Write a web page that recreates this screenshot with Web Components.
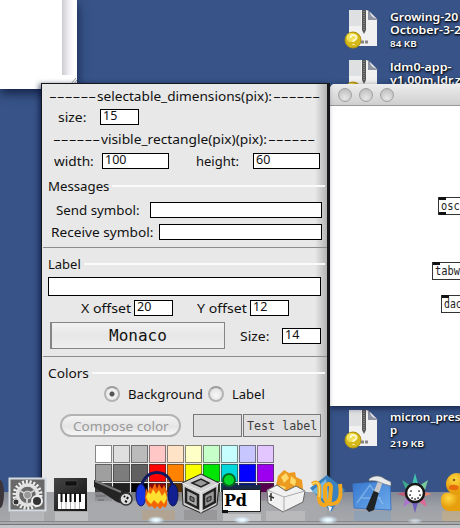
<!DOCTYPE html>
<html lang="en"><head><meta charset="utf-8"><title>Desktop</title>
<style>html,body{margin:0;width:460px;height:528px;overflow:hidden}</style></head>
<body><desk-top></desk-top>
<script>
const define = (name, html, init) => customElements.define(name, class extends HTMLElement {
  constructor() { super(); this.attachShadow({mode: 'open'}).innerHTML = html; }
  connectedCallback() { if (init) init(this, this.shadowRoot); }
});

// Text stretched horizontally to the width in w, with m as its left margin.
define('fit-text', `<style>
  :host{display:block;flex:none;white-space:pre;line-height:16px;height:16px}
  span{display:inline-block;transform-origin:0 50%;vertical-align:top}
  </style><span><slot></slot></span>`, (el, root) => {
  const w = +el.getAttribute('w'), s = root.querySelector('span');
  el.style.width = w + 'px';
  el.style.marginLeft = (el.getAttribute('m') || 0) + 'px';
  s.style.transform = `scaleX(${w / s.offsetWidth})`;
});

define('text-entry', `<style>
  :host{display:flex;flex:none;box-sizing:border-box;height:16px;border:1px solid #000;background:#fff;padding-left:2px;align-items:flex-start}
  ::slotted(fit-text){line-height:12px;height:12px;font-size:12.5px}
  </style><slot></slot>`, el => {
  el.style.width = el.getAttribute('w') + 'px';
  el.style.marginLeft = (el.getAttribute('m') || 0) + 'px';
});

define('form-row', `<style>:host{display:flex;flex:none;align-items:center;box-sizing:border-box}</style><slot></slot>`, el => {
  el.style.height = el.getAttribute('h') + 'px';
});

define('group-head', `<style>:host{display:flex;flex:none;align-items:center;box-sizing:border-box;padding:1px 2px 0 6px;gap:3px}
  i{flex:1;height:2px;background:#fafafa}</style><slot></slot><i></i>`, el => {
  el.style.height = el.getAttribute('h') + 'px';
});

define('rule-line', `<style>:host{display:block;flex:none;height:1px;background:#8b8b8b;margin-left:1px}</style>`);

define('radio-dot', `<style>:host{display:block;flex:none;box-sizing:border-box;width:16px;height:16px;border-radius:50%;border:2px solid #b3b3b3;border-top-color:#9c9c9c;background:radial-gradient(circle at 50% 60%,#f7f7f7,#dcdcdc)}
  :host([on]){background:radial-gradient(circle,#555 0 2px,#eee 3px)}</style>`);

define('color-grid', `<style>:host{display:grid;grid-template-columns:repeat(10,17px);grid-auto-rows:18px;gap:1px;width:179px;background:#e8e8e8;margin-left:53px}
  i{box-sizing:border-box;border:1px solid rgba(55,55,55,.6)}</style>`, (el, root) => {
  const c = ['#fff','#dfdfdf','#bbb','#ffc7c6','#ffe3c6','#feffc6','#c6ffc7','#c6feff','#c7c6ff','#e3c6ff',
    '#9f9f9f','#7c7c7c','#606060','#ff0400','#ff8300','#faff00','#00e504','#00d8dc','#0400ff','#9c00ee',
    '#404040','#202020','#000','#8c0808','#583000','#782814','#285014','#004450','#001488','#580050'];
  root.innerHTML += c.map(x => `<i style="background:${x}"></i>`).join('');
});

define('props-dialog', `<style>
  :host{display:flex;flex-direction:column;box-sizing:border-box;width:289px;height:445px;border:1px solid #15161c;border-right:3px solid #17191b;
   background:linear-gradient(90deg,transparent 273px,rgba(80,80,80,.34) 285px),#e8e8e8;color:#111;font:13px "Noto Sans",sans-serif;box-shadow:-2px 1px 5px rgba(5,15,50,.65)}
  .btn{display:flex;align-items:center;justify-content:center;box-sizing:border-box;width:175px;height:27px;margin-left:8px;border:1px solid #858585;border-left-width:2px;background:linear-gradient(#f1f1f1,#e7e7e7 50%,#eee)}
  .pill{display:flex;align-items:center;justify-content:center;box-sizing:border-box;width:121px;height:23px;margin-left:18px;border:2px solid #b3b3b3;border-radius:12px;background:linear-gradient(#f3f3f3,#e5e5e5 55%,#f6f6f6);color:#999}
  .sw{display:flex;align-items:center;box-sizing:border-box;width:49px;height:23px;border:1px solid #777;background:#e0e0e0;margin-left:12px}
  .sw.t{width:78px;margin-left:1px;color:#3d3d3d}
  .mono{font-family:"DejaVu Sans Mono",monospace}
  .g{flex:none}
  </style>
  <form-row h="24"><fit-text w="47" m="7">------</fit-text><fit-text w="175" m="1">selectable_dimensions(pix):</fit-text><fit-text w="47" m="1">------</fit-text></form-row>
  <div class="g" style="height:1px"></div>
  <form-row h="16"><fit-text w="29" m="16">size:</fit-text><text-entry w="39" m="13"><fit-text w="14">15</fit-text></text-entry></form-row>
  <form-row h="28"><fit-text w="47" m="11">------</fit-text><fit-text w="166" m="1">visible_rectangle(pix)(pix):</fit-text><fit-text w="47" m="1">------</fit-text></form-row>
  <form-row h="16"><fit-text w="40" m="12">width:</fit-text><text-entry w="67" m="8"><fit-text w="21">100</fit-text></text-entry><fit-text w="43" m="27">height:</fit-text><text-entry w="67" m="14"><fit-text w="14">60</fit-text></text-entry></form-row>
  <group-head h="33"><fit-text w="61">Messages</fit-text></group-head>
  <form-row h="16"><fit-text w="84" m="14">Send symbol:</fit-text><text-entry w="172" m="10"></text-entry></form-row>
  <div class="g" style="height:6px"></div>
  <form-row h="16"><fit-text w="102" m="9">Receive symbol:</fit-text><text-entry w="163" m="6"></text-entry></form-row>
  <div class="g" style="height:7px"></div><rule-line></rule-line>
  <group-head h="29" style="padding-top:3px"><fit-text w="33">Label</fit-text></group-head>
  <form-row h="19"><text-entry w="273" m="6" style="height:19px"></text-entry></form-row>
  <div class="g" style="height:4px"></div>
  <form-row h="16"><fit-text w="50" m="39">X offset</fit-text><text-entry w="39" m="3"><fit-text w="14">20</fit-text></text-entry><fit-text w="50" m="24">Y offset</fit-text><text-entry w="39" m="3"><fit-text w="14">12</fit-text></text-entry></form-row>
  <div class="g" style="height:6px"></div>
  <form-row h="27"><div class="btn"><fit-text class="mono" w="58" style="font-size:16px">Monaco</fit-text></div><fit-text w="29" m="15">Size:</fit-text><text-entry w="39" m="13"><fit-text w="14">14</fit-text></text-entry></form-row>
  <div class="g" style="height:7px"></div><rule-line></rule-line>
  <group-head h="29" style="padding-top:3px"><fit-text w="41">Colors</fit-text></group-head>
  <form-row h="16"><radio-dot on style="margin-left:62px"></radio-dot><fit-text w="75" m="8">Background</fit-text><radio-dot style="margin-left:5px"></radio-dot><fit-text w="33" m="8">Label</fit-text></form-row>
  <div class="g" style="height:12px"></div>
  <form-row h="23"><div class="pill"><fit-text w="96">Compose color</fit-text></div><div class="sw"></div><div class="sw t"><fit-text class="mono" w="70" m="3" style="font-size:12px">Test label</fit-text></div></form-row>
  <div class="g" style="height:8px"></div><color-grid></color-grid>`);

define('patch-box', `<style>:host{position:absolute;box-sizing:border-box;width:60px;height:18px;border:1px solid #333;background:#fff;font:12px/16px "DejaVu Sans Mono",monospace;color:#222;padding-left:2px}
  i{position:absolute;left:0;top:-1px;width:7px;height:3px;background:#111}i.b{top:auto;bottom:-1px}:host(:not([out])) .b{display:none}</style><i></i><i class="b"></i><slot></slot>`);

define('patch-window', `<style>
  :host{display:block;width:160px;height:322px;background:#fff;border-radius:5px 0 0 0;overflow:hidden;box-shadow:0 2px 6px rgba(0,0,30,.6)}
  header{display:flex;gap:7px;align-items:center;height:22px;box-sizing:border-box;padding-left:8px;border-bottom:1px solid #999;background:linear-gradient(#ededed,#cfcfcf)}
  b{width:14px;height:14px;box-sizing:border-box;border-radius:50%;border:1.5px solid #a0a0a0;background:radial-gradient(circle at 50% 75%,#e7e7e7,#b7b7b7)}
  </style><header><b></b><b></b><b></b></header>
  <patch-box out style="left:108px;top:113px"><fit-text w="25">osc~</fit-text></patch-box>
  <patch-box style="left:102px;top:178px"><fit-text w="25">tabw</fit-text></patch-box>
  <patch-box style="left:111px;top:211px"><fit-text w="18">dac</fit-text></patch-box>`);

define('back-window', `<style>:host{display:flex;justify-content:flex-end;width:77px;height:89px;background:#fff;box-shadow:0 4px 10px rgba(5,15,45,.75)}
  div{width:15px;height:75px;background:linear-gradient(90deg,#cfcbd2,#f0eef2 45%,#fff 80%)}
  svg{position:absolute;right:0;bottom:5px}</style><div></div><svg width="9" height="6"><path d="M3 6l5-6M6 6l3-4" stroke="#999"/></svg>`);

define('zip-file', `<style>
  :host{display:flex;width:118px;color:#fff;font:600 11.5px/13px "Noto Sans",sans-serif;text-shadow:1px 1px 2px #000a,0 1px 2px #000}
  svg{flex:none;margin-right:12px}
  .n{display:flex;flex-direction:column;padding-top:1px;white-space:nowrap}
  ::slotted(fit-text){height:13px;line-height:13px}
  </style><svg width="36" height="40" viewBox="0 0 36 40"><path d="M5 1h18l10 10v26H5z" fill="#f1f1f1"/><path d="M5 1h12v16H5z" fill="#d4d5d8" opacity=".6"/><path d="M24 1v10h10z" fill="#8d93a2"/><path d="M26 3q0 5 7 7z" fill="#e2e4e8"/><path d="M18 1h4v20l-2 4-2-4z" fill="#555"/><path d="M20 2v19" stroke="#aaa" stroke-dasharray="1 1"/><circle cx="9" cy="31" r="8" fill="#d5b91a" stroke="#af9210"/><circle cx="7" cy="28.500" r="4.500" fill="#f1e25a"/><path d="M6.500 29q0-3 3-3t3 2.500q0 2-3 3v1.500M9.500 35v1" fill="none" stroke="#fff8c8" stroke-width="2"/><path d="M17 33h8" stroke="#888" stroke-width="3" stroke-dasharray="3 1"/></svg><div class="n"><slot></slot></div>`);

// Dock icons, each drawn at its place along the shelf.
define('dock-bar', `<style>
  :host{display:block;width:460px;height:68px}svg{display:block}
  </style><svg width="460" height="68" viewBox="0 460 460 68">
  <defs><linearGradient id="s" x2="0" y2="1"><stop offset="0" stop-color="#929397" stop-opacity=".82"/><stop offset=".45" stop-color="#a4a5a8" stop-opacity=".94"/><stop offset="1" stop-color="#a8a9ab"/></linearGradient>
  <linearGradient id="k" x2="1" y2="1"><stop offset="0" stop-color="#444"/><stop offset="1" stop-color="#111"/></linearGradient>
  <linearGradient id="bl" x2="1" y2="1"><stop offset="0" stop-color="#3577cf"/><stop offset="1" stop-color="#70acec"/></linearGradient>
  <radialGradient id="du" cx=".4" cy=".3"><stop offset="0" stop-color="#ffd943"/><stop offset="1" stop-color="#e79f0e"/></radialGradient>
  <radialGradient id="gl"><stop offset="0" stop-color="#fff"/><stop offset=".4" stop-color="#dff3ff" stop-opacity=".9"/><stop offset="1" stop-color="#cfeaff" stop-opacity="0"/></radialGradient></defs>
  <rect y="492" width="460" height="32" fill="url(#s)"/>
  <g opacity=".32"><path d="M10 512h34v10H10z" fill="#ddd"/><path d="M55 512h33v10H55z" fill="#eee"/><path d="M142 510h33v10h-33z" fill="#c89a62"/><path d="M184 510h33v10h-33z" fill="#777"/><path d="M223 514h38v8h-38z" fill="#fff"/><path d="M266 511h39v10h-39z" fill="#ddd"/><path d="M354 511h37v10h-37z" fill="#6d9bce"/><path d="M442 511h18v10h-18z" fill="#edbb60"/></g>
  <rect y="521" width="460" height="1" fill="#87888b"/><rect y="522" width="460" height="2" fill="#aaa"/><rect y="524" width="460" height="1" fill="#737477"/><rect y="525" width="460" height="3" fill="#c4c5c9"/>
  <ellipse cx="0" cy="494" rx="4" ry="14" fill="#3b3438"/>
  <g><rect x="9.500" y="478.500" width="36" height="32" fill="#696969" stroke="#d6dbe2" stroke-width="2"/><circle cx="27.500" cy="495" r="13" fill="none" stroke="#eee" stroke-width="4" stroke-dasharray="2 1.700"/><circle cx="27.500" cy="495" r="10" fill="none" stroke="#e3e3e3" stroke-width="3.500"/><path d="M27 495l-8-5M27 495l8-5M27 495v9" stroke="#ccc" stroke-width="2"/><circle cx="27.500" cy="495" r="4" fill="#999" stroke="#ddd"/><circle cx="37" cy="501" r="5" fill="#333" stroke="#eee" stroke-width="2"/><circle cx="16" cy="502" r="3" fill="#333" stroke="#ddd"/></g>
  <g><path d="M54 478h33v33H54z" fill="url(#k)"/><path d="M65 481h12v5H65z" fill="#111" stroke="#555" stroke-width=".5"/><path d="M58 494h27v15H58z" fill="#fff"/><path d="M61.500 494v15M66 494v15M70.500 494v15M75 494v15M79.500 494v15" stroke="#777" stroke-width=".6"/><path d="M61.500 493v9M66 493v9M70.500 493v9M75 493v9M80 493v9" stroke="#111" stroke-width="2"/></g>
  <g><path d="M94 480l17 6 19 7-4 12-9-3-23-15z" fill="#242424"/><path d="M95 481l26 11" stroke="#777" stroke-width="2"/><path d="M96 496h10M98 500h6" stroke="#666"/><ellipse cx="126" cy="499" rx="6" ry="6" fill="#ddd" stroke="#333" stroke-width="1.500"/><path d="M124 496l1 1M128 497l-1 2M125 501l2 1" stroke="#111" stroke-width="2"/></g>
  <g><path d="M141 495C138 465 176 465 173 495" fill="none" stroke="#10195d" stroke-width="3"/><ellipse cx="141" cy="495" rx="5" ry="11" fill="#1836df" stroke="#111770"/><ellipse cx="173" cy="495" rx="5" ry="11" fill="#111f90" stroke="#0c1554"/><path d="M145 498l1-10 2 4 2-6 2 3 3-6 2 6 2-5 3 5 2-4 3 6v14l-2 3-2-2-3 3-3-3-2 3-3-3-3 1-3-4z" fill="#f36606"/><path d="M146 497l2-5 3 2 2-5 3 5 3-4 3 6 3-4 2 6-3 6-3-4-3 4-4-4-3 4-3-3z" fill="#ffe02e"/></g>
  <g stroke="#222" stroke-width="1"><path d="M201 474l18 9-2 22-16 8-18-8-1-22z" fill="#d0d0d0"/><path d="M182 483l19 9 18-9M201 492v21" fill="none" stroke="#eee"/><path d="M192 483l9-4 8 4-8 4z" fill="#999" stroke-width="1.500"/><path d="M186 489l12 6v13l-12-6z" fill="#aaa" stroke-width="2.500"/><path d="M215 489l-11 6v13l11-6z" fill="#999" stroke-width="2.500"/><path d="M190 496l4 2v4l-4-2zM211 496l-4 2v4l4-2z" fill="#777"/></g>
  <g><path d="M223 485h7v-8h4v8h27v5h-38z" fill="#182a4a"/><circle cx="229" cy="480" r="6" fill="#07d928" stroke="#066b21" stroke-width="2"/><path d="M222.500 489.500h38v22h-38z" fill="#fff" stroke="#222"/><path d="M222 510h6v3h-6z" fill="#111"/><text x="224" y="506" font-family="DejaVu Serif" font-weight="bold" font-size="16" textLength="23" fill="#000">Pd</text></g>
  <g><path d="M276 486l2-10 6-6 5 3 6-1 1 5 6 3 1 9-12 5-12-2z" fill="#ed9b20"/><path d="M281 477l5-4 3 5-5 5zM291 476l5 4-1 6-5-3zM279 485l7 2-2 4z" fill="#ffd96a"/><path d="M267 490l10-5 9 6 10-5 9 5-2 11-20 10-15-9z" fill="#f1f1f1" stroke="#666"/><path d="M267 490l17 7 21-6M284 497v15" fill="none" stroke="#aaa"/><path d="M271 493v8M269 496l5 2" stroke="#333" stroke-width="1.500"/></g>
  <g><path d="M310 488l17-13 18 15-14 22z" fill="#3981bf"/><path d="M312 491l14-12 4 25" fill="#77b7df"/><path d="M312 484c8-5 8 4 7 13-1 9 9 11 11 3l1-13c0-4-6-4-6 1 0 10-1 15 6 16 8 0 11-6 9-20" fill="none" stroke="#f4a81d" stroke-width="4"/><path d="M312 484c8-5 8 4 7 13" fill="none" stroke="#ffe170" stroke-width="1.200"/><path d="M328 506l4 1-2 5z" fill="#fff"/></g>
  <g><path d="M353 484l37-3 1 29-37-2z" fill="url(#bl)" stroke="#3f78c5"/><path d="M357 503l13-18 13 19M361 498h20" fill="none" stroke="#98c5f2" stroke-width="1.500" opacity=".6"/><path d="M374 490l5 2-5 18-5 2-3-3z" fill="#202326"/><path d="M379 479l4 2-4 12-5-2z" fill="#c8c8c8"/><path d="M369 479c5-4 11-4 16 0l6 3v4l-7-2c-5-2-8-4-15-3z" fill="#e7e9eb" stroke="#666" stroke-width=".6"/></g>
  <g><path d="M415 473l3 11-6 1z" fill="#42c3b0"/><path d="M402 480l9 6-5 4z" fill="#40a98c"/><path d="M428 480l-3 10-6-4z" fill="#78c99c"/><path d="M397 494l10-3v6z" fill="#bb5b76"/><path d="M432 494l-10-3v6z" fill="#e48476"/><path d="M403 507l3-9 5 4z" fill="#ae74cf"/><path d="M427 507l-8-5 5-4z" fill="#dc6997"/><path d="M415 513l-3-11h6z" fill="#705dbd"/><circle cx="415" cy="493" r="9" fill="#fff" stroke="#171717" stroke-width="2.500"/><path d="M411 491h.1M419 491h.1M410 495h.1M420 495h.1M412 498h.1M415 499h.1M418 498h.1" stroke="#111" stroke-width="1.700" stroke-linecap="round"/></g>
  <g fill="url(#du)"><path d="M441 500c0-7 5-8 9-7h10v18h-12c-5-1-7-5-7-11z"/><circle cx="457" cy="484" r="11"/><path d="M449 486q6-3 10 1-1 5-10 2z" fill="#e66b0b"/><circle cx="454" cy="480" r="1.300" fill="#8a5a10"/></g>
  <ellipse cx="156" cy="520" rx="9" ry="4" fill="url(#gl)"/><ellipse cx="242" cy="520" rx="9" ry="4" fill="url(#gl)"/><ellipse cx="328" cy="520" rx="10" ry="4.500" fill="url(#gl)"/><ellipse cx="415" cy="521" rx="8" ry="3" fill="url(#gl)" opacity=".6"/>
  </svg>`);

define('desk-top', `<style>
  :host{display:block;position:relative;width:460px;height:528px;overflow:hidden;background:#375387}
  .w{position:absolute}
  .kb{font-size:9.5px;padding-top:1px}
  </style>
  <zip-file class="w" style="left:344px;top:9px"><fit-text w="68" m="-2">Growing-20</fit-text><fit-text w="71" m="-2">October-3-2</fit-text><fit-text class="kb" w="27" m="-2">84 KB</fit-text></zip-file>
  <zip-file class="w" style="left:344px;top:59px"><fit-text w="62" m="-2">ldm0-app-</fit-text><fit-text w="71" m="-2">v1.00m.ldr.z</fit-text></zip-file>
  <zip-file class="w" style="left:344px;top:409px"><fit-text w="70" m="-2">micron_pres</fit-text><fit-text w="7" m="-2">p</fit-text><fit-text class="kb" w="34" m="-2">219 KB</fit-text></zip-file>
  <back-window class="w" style="left:0;top:0"></back-window>
  <patch-window class="w" style="left:330px;top:84px"></patch-window>
  <props-dialog class="w" style="left:41px;top:83px"></props-dialog>
  <dock-bar class="w" style="left:0;top:460px"></dock-bar>`);
</script></body></html>
